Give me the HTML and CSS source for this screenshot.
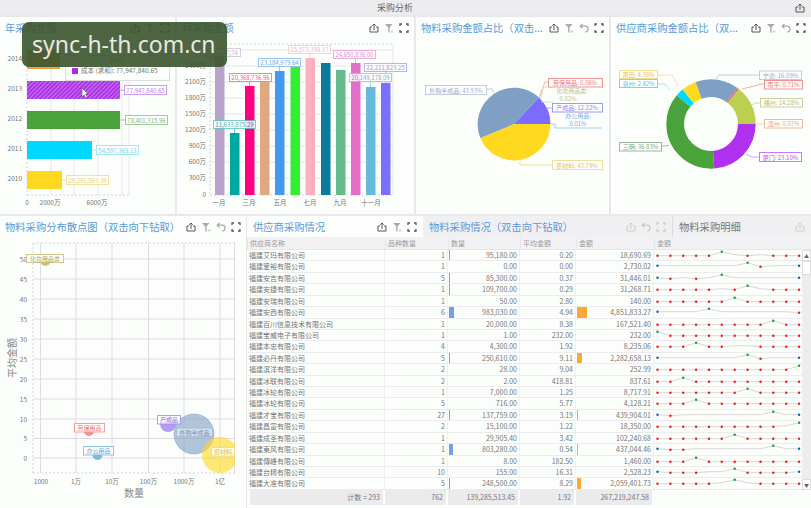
FILE: index.html
```html
<!DOCTYPE html>
<html lang="zh-CN">
<head>
	<title>采购分析</title>
	<meta charset="utf-8" />
	<link rel="stylesheet" href="styles.css">
</head>
<body>
<svg class="sprites">
	<symbol id="i-share" viewBox="0 0 10 10"><path d="M3 4H1v5h8V4H7M5 7V1M3.3 2.7L5 1l1.7 1.7" fill="none" stroke="currentColor" stroke-width="1"/></symbol>
	<symbol id="i-filter" viewBox="0 0 10 10"><path d="M1 1h7.5L5.6 4.6V9.5H4.2V4.6z" fill="currentColor"/><path d="M7 7.5l2 2m0-2l-2 2" stroke="currentColor" stroke-width=".7"/></symbol>
	<symbol id="i-undo" viewBox="0 0 10 10"><path d="M3.5 1L1.2 3.2l2.3 2.2M1.2 3.2h4.6a2.9 2.9 0 0 1 .6 5.8" fill="none" stroke="currentColor" stroke-width="1.3"/></symbol>
	<symbol id="i-expand" viewBox="0 0 10 10"><path d="M1 3V1h2M7 1h2v2M9 7v2H7M3 9H1V7" fill="none" stroke="currentColor" stroke-width="1.3"/></symbol>
</svg>

<div class="page">
	<header class="topbar">
		<span class="topbar-title">采购分析</span>
		<svg class="icon"><use href="#i-share"/></svg>
	</header>

	<div class="row-top">
		<!-- year bars -->
		<section class="panel panel-year">
			<div class="panel-head">
				<h2 class="panel-title">年采购金额</h2>
				<div class="tools">
					<svg class="icon"><use href="#i-share"/></svg>
					<svg class="icon off"><use href="#i-filter"/></svg>
					<svg class="icon"><use href="#i-expand"/></svg>
				</div>
			</div>
			<svg class="chart" width="175" height="176" viewBox="0 38 175 176">
				<defs>
					<pattern id="hatch" width="3" height="3" patternUnits="userSpaceOnUse" patternTransform="rotate(-45)">
						<rect width="3" height="3" fill="#a92be6"/>
						<rect width="3" height="1.2" fill="#c877f0"/>
					</pattern>
				</defs>
				<g class="grid">
					<path d="M27 46H129M51 46V195M74 46V195M98 46V195M122 46V195M129 46V195"/>
					<path class="dash" d="M27 46V195M27 195H129"/>
				</g>
				<rect x="27" y="50" width="33" height="19" fill="#f0a040"/>
				<rect x="27" y="81" width="93" height="18" fill="url(#hatch)"/>
				<rect x="27" y="111" width="93" height="18" fill="#4aa23a"/>
				<rect x="27" y="141" width="65" height="18" fill="#00d8ff"/>
				<rect x="27" y="171" width="35" height="18" fill="#ffd820"/>
				<g class="tick end">
					<text x="22" y="61">2014</text>
					<text x="22" y="91">2013</text>
					<text x="22" y="121">2012</text>
					<text x="22" y="151">2011</text>
					<text x="22" y="181">2010</text>
				</g>
				<g class="tick mid">
					<text x="27" y="205">0</text>
					<text x="50" y="205">2000万</text>
					<text x="97" y="205">6000万</text>
				</g>
				<g class="tag">
					<path d="M120 90h4" stroke="#c58af0"/><rect x="124.5" y="85.5" width="42" height="9" stroke="#c58af0"/><text x="145.5" y="92.5" fill="#b56ae8">77,947,840.65</text>
					<path d="M120 120h5" stroke="#8fc486"/><rect x="125.5" y="115.5" width="42" height="9" stroke="#8fc486"/><text x="146.5" y="122.5" fill="#6fa866">78,401,315.96</text>
					<path d="M92 150h4" stroke="#8fe4f8"/><rect x="96.5" y="145.5" width="42" height="9" stroke="#8fe4f8"/><text x="117.5" y="152.5" fill="#5cc8e8">54,597,369.13</text>
					<path d="M62 180h4" stroke="#f0dc90"/><rect x="66.5" y="175.5" width="42" height="9" stroke="#f0dc90"/><text x="87.5" y="182.5" fill="#e0c860">29,291,563.39</text>
				</g>
				<rect x="65.5" y="55.5" width="104" height="25" fill="#fbfefb" stroke="#ddd"/>
				<text class="tick mid" x="116" y="62">2013</text>
				<rect x="72" y="68" width="6" height="6" fill="#a92be6"/>
				<text class="tick" x="81" y="73">成本 (求和): 77,947,840.65</text>
				<path d="M82 88v9l2-2 2 3 1.5-1-2-3h2.5z" fill="#fff" stroke="#555" stroke-width=".6"/>
			</svg>
		</section>

		<!-- month bars -->
		<section class="panel panel-month">
			<div class="panel-head">
				<h2 class="panel-title">月采购金额</h2>
				<div class="tools">
					<svg class="icon"><use href="#i-share"/></svg>
					<svg class="icon off"><use href="#i-filter"/></svg>
					<svg class="icon"><use href="#i-expand"/></svg>
				</div>
			</div>
			<svg class="chart" width="237" height="176" viewBox="177 38 237 176">
				<g class="grid">
					<path d="M210 50H393M210 66H393M210 82H393M210 98H393M210 114H393M210 130H393M210 146H393M210 162H393M210 178H393M393 44V195"/>
					<path class="dash" d="M210 44H393M210 44V195M210 195H393"/>
				</g>
				<g class="tick end">
					<text x="206" y="68">2400万</text>
					<text x="206" y="84">2100万</text>
					<text x="206" y="100">1800万</text>
					<text x="206" y="116">1500万</text>
					<text x="206" y="132">1200万</text>
					<text x="206" y="148">900万</text>
					<text x="206" y="164">600万</text>
					<text x="206" y="180">300万</text>
					<text x="206" y="197">0</text>
				</g>
				<g class="tick mid">
					<text x="219" y="205">一月</text>
					<text x="249" y="205">三月</text>
					<text x="280" y="205">五月</text>
					<text x="310" y="205">七月</text>
					<text x="340" y="205">九月</text>
					<text x="371" y="205">十一月</text>
				</g>
				<rect x="215" y="52" width="9.5" height="143" fill="#b8a3cc"/>
				<rect x="230" y="133" width="9.5" height="62" fill="#00a8a0"/>
				<rect x="245" y="86" width="9.5" height="109" fill="#ff0080"/>
				<rect x="260" y="82" width="9.5" height="113" fill="#e0a880"/>
				<rect x="275" y="71" width="9.5" height="124" fill="#4499ee"/>
				<rect x="290.5" y="67" width="9.5" height="128" fill="#33ee33"/>
				<rect x="305.5" y="58" width="9.5" height="137" fill="#ffb0c0"/>
				<rect x="321" y="63" width="9.5" height="132" fill="#0a7a9a"/>
				<rect x="336" y="70" width="9.5" height="125" fill="#66bb8a"/>
				<rect x="351" y="63" width="9.5" height="132" fill="#e070c8"/>
				<rect x="366" y="87" width="9.5" height="108" fill="#66bbdd"/>
				<rect x="381" y="83" width="9.5" height="112" fill="#7a70ff"/>
				<g class="tag">
					<rect x="205.5" y="48.5" width="35" height="8" stroke="#d0c4dc"/><text x="232" y="55" fill="#b8a3cc">7,74</text>
					<path d="M234.5 128v5" stroke="#66c4c0"/><rect x="213.5" y="120.5" width="42" height="8" stroke="#66c4c0"/><text x="234.5" y="127" fill="#30a8b0">11,633,875.29</text>
					<path d="M249.5 82v4" stroke="#ff66b0"/><rect x="229.5" y="73.5" width="42" height="8" stroke="#ff66b0"/><text x="250.5" y="80" fill="#ff3090">20,368,736.96</text>
					<path d="M279.5 66v5" stroke="#88bbf0"/><rect x="258.5" y="58.5" width="42" height="8" stroke="#88bbf0"/><text x="279.5" y="65" fill="#5599dd">23,184,979.64</text>
					<path d="M310 53v5" stroke="#ffc8d4"/><rect x="288.5" y="45.5" width="42" height="8" stroke="#ffc8d4"/><text x="309.5" y="52" fill="#f8aabc">25,573,398.17</text>
					<path d="M355.5 58v5" stroke="#e8a0d8"/><rect x="333.5" y="50.5" width="42" height="8" stroke="#e8a0d8"/><text x="354.5" y="57" fill="#e070c8">24,650,836.00</text>
					<path d="M386 71v12" stroke="#aaa4ff"/><rect x="364.5" y="63.5" width="42" height="8" stroke="#aaa4ff"/><text x="385.5" y="70" fill="#8880f0">22,211,823.25</text>
					<path d="M370.5 82v5" stroke="#88cce0"/><rect x="349.5" y="73.5" width="42" height="8" stroke="#88cce0"/><text x="370.5" y="80" fill="#55aacc">20,149,178.09</text>
				</g>
			</svg>
		</section>

		<!-- material pie -->
		<section class="panel panel-pie">
			<div class="panel-head">
				<h2 class="panel-title">物料采购金额占比（双击...</h2>
				<div class="tools">
					<svg class="icon"><use href="#i-share"/></svg>
					<svg class="icon off"><use href="#i-filter"/></svg>
					<svg class="icon off"><use href="#i-undo"/></svg>
					<svg class="icon"><use href="#i-expand"/></svg>
				</div>
			</div>
			<svg class="chart" width="193" height="176" viewBox="416 38 193 176">
				<path d="M514 124H550.5A36.5 36.5 0 0 1 480.3 137.9z" fill="#ffd820"/>
				<path d="M514 124L480.3 137.9A36.5 36.5 0 0 1 539 97.5z" fill="#7f9fc4"/>
				<path d="M514 124L539 97.5A36.5 36.5 0 0 1 550.5 124z" fill="#7b6cff"/>
				<g class="tag">
					<path d="M487 89h5l3 5" stroke="#b8c4d8"/><rect x="425.5" y="85.5" width="61" height="9" stroke="#b8c4d8"/><text x="456" y="92.5" fill="#8aa0c0">外购半成品: 43.93%</text>
					<path d="M539 98l6-16h3" stroke="#f0a0a0"/><rect x="548.5" y="78.5" width="54" height="8.5" stroke="#f08080"/><text x="575" y="85" fill="#e86060">劳保用品: 0.06%</text>
					<path d="M541 98l2-11h10M541 102h12" stroke="#d8d8a8"/><text x="572" y="93" fill="#b8b87a">化妆用品类:</text><text x="568" y="101" fill="#b8b87a">0.02%</text>
					<path d="M546 108h6" stroke="#a8a0ff"/><rect x="552.5" y="103.5" width="50" height="8.5" stroke="#9088f0"/><text x="577" y="110" fill="#7b6cff">产成品: 12.22%</text>
					<path d="M551 124h4v4h47" stroke="#99c4ee"/><text x="578" y="118" fill="#66a0d8">办公用品:</text><text x="578" y="126" fill="#66a0d8">0.01%</text>
					<path d="M520 160v5h32" stroke="#f0dc90"/><rect x="552.5" y="160.5" width="50" height="9" stroke="#f0dc90"/><text x="577" y="167.5" fill="#d8b838">原材料: 43.79%</text>
				</g>
			</svg>
		</section>

		<!-- supplier donut -->
		<section class="panel panel-donut">
			<div class="panel-head">
				<h2 class="panel-title">供应商采购金额占比（双...</h2>
				<div class="tools">
					<svg class="icon"><use href="#i-share"/></svg>
					<svg class="icon off"><use href="#i-filter"/></svg>
					<svg class="icon off"><use href="#i-undo"/></svg>
					<svg class="icon"><use href="#i-expand"/></svg>
				</div>
			</div>
			<svg class="chart" width="200" height="176" viewBox="611 38 200 176">
				<g class="donut">
					<circle cx="711" cy="124" r="35.8" pathLength="100" stroke="#b030f0" stroke-dasharray="23.8 100"/>
					<circle cx="711" cy="124" r="35.8" pathLength="100" stroke="#4aa23a" stroke-dasharray="37.3 100" stroke-dashoffset="-23.8"/>
					<circle cx="711" cy="124" r="35.8" pathLength="100" stroke="#00d8ff" stroke-dasharray="2.9 100" stroke-dashoffset="-61.1"/>
					<circle cx="711" cy="124" r="35.8" pathLength="100" stroke="#ffd820" stroke-dasharray="5.4 100" stroke-dashoffset="-64"/>
					<circle cx="711" cy="124" r="35.8" pathLength="100" stroke="#7f9fc4" stroke-dasharray="15.6 100" stroke-dashoffset="-69.4"/>
					<circle cx="711" cy="124" r="35.8" pathLength="100" stroke="#f07070" stroke-dasharray="0.8 100" stroke-dashoffset="-85"/>
					<circle cx="711" cy="124" r="35.8" pathLength="100" stroke="#bcd050" stroke-dasharray="14.2 100" stroke-dashoffset="-85.8"/>
				</g>
				<g class="tag">
					<path d="M759 75h-40l-3 4" stroke="#b8c4d8"/><rect x="759.5" y="71" width="42" height="8.5" stroke="#b8c4d8"/><text x="780.5" y="77.5" fill="#8aa0c0">宁德: 16.09%</text>
					<path d="M764 84h-2l-20 5" stroke="#f0a0a0"/><rect x="764.5" y="80.5" width="38" height="8.5" stroke="#f08080"/><text x="783.5" y="87" fill="#e86060">南平: 0.71%</text>
					<path d="M760 103h-5l-3 2" stroke="#d0d8a0"/><rect x="760.5" y="98.5" width="42" height="8.5" stroke="#c4c890"/><text x="781.5" y="105" fill="#a8b060">福州: 14.28%</text>
					<path d="M764 124h-8" stroke="#f4c8a0"/><rect x="764.5" y="119.5" width="38" height="8.5" stroke="#f0b080"/><text x="783.5" y="126" fill="#e89858">漳州: 0.07%</text>
					<path d="M759 157h-7l-6-3" stroke="#d090f8"/><rect x="759.5" y="152.5" width="42" height="9" stroke="#c060f4"/><text x="780.5" y="159.5" fill="#b030f0">厦门: 23.10%</text>
					<path d="M662 146h4l3-1" stroke="#a0a8a0"/><rect x="619.5" y="142.5" width="42" height="8.5" stroke="#90a890"/><text x="640.5" y="149" fill="#6a9a60">三明: 36.83%</text>
					<path d="M657 75h15l6 10" stroke="#f4e0a0"/><rect x="619.5" y="70.5" width="38" height="8" stroke="#f0d880"/><text x="638.5" y="77" fill="#e0b830">莆田: 4.38%</text>
					<path d="M657 84h8l5 6" stroke="#90e8fc"/><rect x="619.5" y="79.5" width="38" height="8" stroke="#50d8f8"/><text x="638.5" y="86" fill="#10c0e8">泉州: 2.42%</text>
				</g>
			</svg>
		</section>
	</div>

	<div class="row-bottom">
		<!-- scatter -->
		<section class="panel panel-scatter">
			<div class="panel-head">
				<h2 class="panel-title">物料采购分布散点图（双击向下钻取）</h2>
				<div class="tools">
					<svg class="icon"><use href="#i-share"/></svg>
					<svg class="icon off"><use href="#i-filter"/></svg>
					<svg class="icon off"><use href="#i-undo"/></svg>
					<svg class="icon"><use href="#i-expand"/></svg>
				</div>
			</div>
			<svg class="chart" width="246" height="271" viewBox="0 237 246 271">
				<defs><clipPath id="plot"><rect x="33" y="243" width="202" height="230"/></clipPath></defs>
				<g class="grid strong">
					<path d="M40.5 243V473M76 243V473M112 243V473M148.5 243V473M184 243V473M220 243V473M234.5 243V473"/>
					<path d="M33 259H235M33 279H235M33 299H235M33 319H235M33 339H235M33 359H235M33 379H235M33 399H235M33 419H235M33 438.5H235M33 458H235"/>
					<path class="dash" d="M33 243H235M33 243V473M33 473H235"/>
				</g>
				<g class="tick end">
					<text x="27" y="261.5">50</text>
					<text x="27" y="281.5">45</text>
					<text x="27" y="301.5">40</text>
					<text x="27" y="321.5">35</text>
					<text x="27" y="341.5">30</text>
					<text x="27" y="361.5">25</text>
					<text x="27" y="381.5">20</text>
					<text x="27" y="401.5">15</text>
					<text x="27" y="421.5">10</text>
					<text x="27" y="441">5</text>
					<text x="27" y="460.5">0</text>
				</g>
				<g class="tick mid">
					<text x="41" y="484">1000</text>
					<text x="76" y="484">1万</text>
					<text x="112" y="484">10万</text>
					<text x="148.5" y="484">100万</text>
					<text x="184" y="484">1000万</text>
					<text x="220" y="484">1亿</text>
				</g>
				<text class="axis-name" x="134" y="497">数量</text>
				<text class="axis-name" transform="translate(16 358) rotate(-90)">平均金额</text>
				<g clip-path="url(#plot)">
					<circle cx="45.5" cy="261" r="5" fill="#c8c07a"/>
					<circle cx="89" cy="431" r="5" fill="#f09090"/>
					<circle cx="97.5" cy="455" r="5" fill="#80b8e0"/>
					<circle cx="168" cy="424" r="8" fill="#b49cf0"/>
					<circle cx="194" cy="434" r="20" fill="#7f9fc4" fill-opacity=".6" stroke="#7f9fc4" stroke-width=".5"/>
					<circle cx="220" cy="455" r="18" fill="#ffd820" fill-opacity=".6"/>
				</g>
				<g class="tag">
					<rect x="26.5" y="254.5" width="37" height="8" stroke="#c8c07a"/><text x="45" y="261" fill="#a8a058">化妆用品类</text>
					<rect x="74.5" y="423.5" width="30" height="8.5" stroke="#f09090"/><text x="89.5" y="430" fill="#e86868">劳保用品</text>
					<rect x="83.5" y="446.5" width="30" height="8.5" stroke="#80b8e0"/><text x="98.5" y="453" fill="#5c98c8">办公用品</text>
					<rect x="157.5" y="415.5" width="23" height="8.5" stroke="#a090f0"/><text x="169" y="422" fill="#8070e0">产成品</text>
					<rect x="176.5" y="428" width="36" height="8.5" stroke="#a8bcd4" fill-opacity=".5"/><text x="194.5" y="434.5" fill="#6a88ac">外购半成品</text>
					<rect x="211.5" y="447.5" width="23" height="8.5" stroke="#f0dc90"/><text x="223" y="454" fill="#d8b838">原材料</text>
				</g>
			</svg>
		</section>

		<!-- table with tabs -->
		<section class="panel panel-table">
			<div class="tabs">
				<div class="tab tab-first">
					<h2 class="panel-title">供应商采购情况</h2>
					<div class="tools">
						<svg class="icon"><use href="#i-share"/></svg>
						<svg class="icon off"><use href="#i-filter"/></svg>
						<svg class="icon"><use href="#i-expand"/></svg>
					</div>
				</div>
				<div class="tab tab-second">
					<h2 class="panel-title">物料采购情况（双击向下钻取）</h2>
					<div class="tools faint">
						<svg class="icon"><use href="#i-share"/></svg>
						<svg class="icon"><use href="#i-undo"/></svg>
						<svg class="icon"><use href="#i-expand"/></svg>
					</div>
				</div>
				<div class="tab tab-third">
					<h2 class="panel-title grey">物料采购明细</h2>
					<div class="tools faint">
						<svg class="icon"><use href="#i-share"/></svg>
					</div>
				</div>
			</div>
			<div class="grid-head">
				<div>供应商名称</div>
				<div>品种数量</div>
				<div>数量</div>
				<div>平均金额</div>
				<div>金额</div>
				<div>金额</div>
			</div>
			<div class="grid-body">
				<div class="rows" id="rows"></div>
				<div class="scrollbar">
					<div class="scroll-btn">▲</div>
					<div class="scroll-thumb"></div>
					<div class="scroll-space"></div>
					<div class="scroll-btn">▼</div>
				</div>
			</div>
			<div class="grid-foot">
				<div>计数 = 293</div>
				<div>762</div>
				<div>139,285,513.45</div>
				<div>1.92</div>
				<div>267,219,247.58</div>
			</div>
		</section>
	</div>
</div>

<div class="watermark">sync-h-th.com.cn</div>
<script src="app.js"></script>
</body>
</html>
```

FILE: styles.css
```css
html, body {
	margin: 0;
	padding: 0;
	height: 100%;
	overflow: hidden;
}
body {
	background: #e8e8ec;
	font: 7px "Noto Sans CJK SC", "Liberation Sans", sans-serif;
	color: #777;
}
.sprites {
	display: none;
}
.page {
	width: 811px;
	height: 508px;
	display: flex;
	flex-direction: column;
	gap: 2px;
}
.topbar {
	height: 15px;
	display: flex;
	align-items: center;
	padding: 0 6px 0 0;
	background: #ececef;
}
.topbar-title {
	flex: 1;
	padding-right: 5px;
	text-align: center;
	font-size: 9px;
	color: #666;
}
.icon {
	width: 10px;
	height: 10px;
	color: #555;
	flex: none;
}
.icon.off {
	color: #aaa;
}
.row-top {
	height: 197px;
	display: flex;
	gap: 2px;
}
.row-bottom {
	height: 292px;
	display: flex;
	gap: 1px;
}
.panel {
	background: #fbfefb;
	display: flex;
	flex-direction: column;
	overflow: hidden;
}
.panel-year { width: 175px; }
.panel-month { width: 237px; }
.panel-pie { width: 193px; }
.panel-donut { width: 200px; }
.panel-scatter { width: 246px; }
.panel-table { width: 564px; }

.panel-head {
	height: 21px;
	flex: none;
	display: flex;
	align-items: center;
	justify-content: space-between;
	padding: 0 5px;
}
.panel-title {
	margin: 0;
	font-size: 10.3px;
	font-weight: normal;
	color: #5a9ad8;
	white-space: nowrap;
}
.panel-title.grey {
	color: #777;
}
.tools {
	display: flex;
	gap: 5px;
}
.tools.faint .icon {
	color: #ccc;
}
.chart {
	display: block;
	flex: none;
}

/* chart bits */
.grid path {
	fill: none;
	stroke: #e8e4ec;
	stroke-width: 1;
}
.grid.strong path {
	stroke: #e2d9e8;
}
.grid path.dash {
	stroke: #d8d2de;
	stroke-dasharray: 2 2;
}
.tick text, text.tick {
	font-size: 6.5px;
	fill: #777;
}
.tick.end text {
	text-anchor: end;
}
.tick.mid text, text.tick.mid {
	text-anchor: middle;
}
.tag {
	opacity: .85;
}
.tag rect {
	fill: #fff;
	stroke-width: 1;
}
.tag path {
	fill: none;
	stroke-width: 1;
}
.tag text {
	font-size: 6px;
	text-anchor: middle;
}
.donut circle {
	fill: none;
	stroke-width: 17.7;
}
.axis-name {
	font-size: 10px;
	fill: #888;
	text-anchor: middle;
}

/* table */
.tabs {
	height: 21px;
	flex: none;
	display: flex;
	background: #f0f0f2;
}
.tab {
	display: flex;
	align-items: center;
	justify-content: space-between;
}
.tab-first {
	width: 176px;
	padding: 0 6px;
	box-sizing: border-box;
	background: #fbfefb;
}
.tab-second {
	width: 250px;
	padding: 0 6px;
	box-sizing: border-box;
	border-right: 1px solid #ddd;
}
.tab-third {
	flex: 1;
	padding: 0 6px;
}
.grid-head, .row, .grid-foot {
	display: grid;
	grid-template-columns: 138px 63px 72px 56px 78px 148px;
}
.grid-head {
	height: 12px;
	flex: none;
	align-items: center;
	background: #f2f2f4;
	border-bottom: 1px solid #e6e6ea;
	color: #999;
	line-height: 11px;
}
.grid-head div {
	padding-left: 2px;
	border-left: 1px solid #e6e6ea;
}
.grid-body {
	height: 240px;
	flex: none;
	display: flex;
}
.rows {
	width: 555px;
}
.row {
	height: 11.43px;
	box-sizing: border-box;
	border-bottom: 1px solid #ececf0;
	line-height: 11.4px;
}
.cell {
	position: relative;
	height: 10.4px;
	padding: 0 2px;
	text-align: right;
	border-right: 1px solid #f0f0f0;
	white-space: nowrap;
}
.cell.name {
	text-align: left;
}
.cell-bar {
	position: absolute;
	left: 1px;
	top: 0;
	bottom: 0;
}
.cell-bar.qty {
	background: #6fa0e8;
}
.cell-bar.amt {
	background: #ffa838;
}
.spark {
	display: block;
}
.scrollbar {
	width: 9px;
	display: flex;
	flex-direction: column;
	background: #ededf0;
}
.scroll-btn {
	height: 11px;
	background: #fff;
	border: 1px solid #ddd;
	box-sizing: border-box;
	font-size: 5px;
	line-height: 9px;
	text-align: center;
	color: #666;
}
.scroll-thumb {
	height: 14px;
	background: #fff;
	border: 1px solid #ddd;
	box-sizing: border-box;
}
.scroll-space {
	flex: 1;
}
.grid-foot {
	height: 15px;
	flex: none;
	margin-left: 3px;
	grid-template-columns: 135px 63px 72px 56px 78px;
	line-height: 15px;
}
.grid-foot div {
	padding-right: 3px;
	text-align: right;
	background: #ebebee;
	border-right: 2px solid #fbfefb;
}

.watermark {
	position: absolute;
	left: 22px;
	top: 22px;
	width: 205px;
	height: 45px;
	box-sizing: border-box;
	padding-left: 10px;
	border-radius: 7px;
	background: rgba(58, 84, 44, .9);
	color: #e8e8e4;
	font: 23px/45px "Noto Sans", sans-serif;
	white-space: nowrap;
}
```

FILE: app.js
```js
// name, kinds, qty, avg, amount, sparkline
// sparkline: r = normal point, g = peak, b = end point, . = no marker
var data = [
	["福建艾玛有限公司", 1, 95180, "0.20", 18690.69, "rrrrrg.r.rrr"],
	["福建爱裕有限公司", 1, 0, "0.00", 2730.02, "b......gr..b"],
	["福建安吉有限公司", 5, 85300, "0.37", 31446.01, "br.r.g.....b"],
	["福建安捷有限公司", 1, 109700, "0.29", 31268.71, "rrrrr.rg.rrr"],
	["福建安瑞有限公司", 1, 50, "2.80", 140, "rrrrrrgrrrrr"],
	["福建安西有限公司", 6, 983030, "4.94", 4851833.27, "b...g......r"],
	["福建百川信息技术有限公司", 1, 20000, "8.38", 167521.40, "rrrrrrrrrgrr"],
	["福建宝威电子有限公司", 1, 1, "232.00", 232, "grrrrrrrrrrr"],
	["福建本忠有限公司", 4, 4300, "1.92", 8235.06, "rrrgrr..rrrr"],
	["福建必丹有限公司", 5, 250610, "9.11", 2282658.13, "b......gr..b"],
	["福建滨洋有限公司", 2, 28, "9.04", 252.99, "rrrrrrrrrrrg"],
	["福建冰联有限公司", 2, 2, "418.81", 837.61, "rrgrrrrrrrrr"],
	["福建冰轮有限公司", 1, 7000, "1.25", 8717.91, "rrrrrrrgrrrr"],
	["福建冰轮有限公司", 5, 716, "5.77", 4128.21, "rrrgrrrrrrrr"],
	["福建才宝有限公司", 27, 137759, "3.19", 439904.01, "br.......g.b"],
	["福建昌富有限公司", 2, 15100, "1.22", 18350, "rrrrrrrrrr.g"],
	["福建成圣有限公司", 1, 29905.40, "3.42", 102240.68, "rrrrrrgrrrrr"],
	["福建東风有限公司", 1, 803280, "0.54", 437044.46, "brr......g.b"],
	["福建傳峰有限公司", 1, 8, "182.50", 1460, "rrrgrrrrrrrr"],
	["福建台精有限公司", 10, 155, "16.31", 2528.23, "brrr..grrrrb"],
	["福建大准有限公司", 5, 248500, "8.29", 2059401.73, "rrrrr.g.rrrr"]
];

var colors = { r: "#f01818", g: "#1a9a40", b: "#1060b0" };
var heights = { r: 5.7, g: 1.8, b: 4.7, ".": 4.7 };

function money(n) {
	return n.toLocaleString("en-US", { minimumFractionDigits: 2, maximumFractionDigits: 2 });
}

function spark(pattern) {
	var line = "", dots = "";
	for (var i = 0; i < pattern.length; i++) {
		var c = pattern.charAt(i);
		var x = (3.5 + i * 12.87).toFixed(1);
		var y = heights[c];
		line += x + "," + y + " ";
		if (c != ".") {
			dots += '<circle cx="' + x + '" cy="' + y + '" r="1.2" fill="' + colors[c] + '"/>';
		}
	}
	return '<svg class="spark" width="148" height="10.4"><polyline points="' + line + '" fill="none" stroke="#d8d8d8"/>' + dots + '</svg>';
}

// small values get no bar at all, the rest at least one pixel
function bar(kind, width) {
	if (width < 0.4) return "";
	return '<span class="cell-bar ' + kind + '" style="width:' + Math.max(width, 1).toFixed(1) + 'px"></span>';
}

var html = "";
for (var i = 0; i < data.length; i++) {
	var d = data[i];
	html += '<div class="row">'
		+ '<div class="cell name">' + d[0] + '</div>'
		+ '<div class="cell">' + d[1] + '</div>'
		+ '<div class="cell">' + bar("qty", d[2] / 983030 * 5) + money(d[2]) + '</div>'
		+ '<div class="cell">' + d[3] + '</div>'
		+ '<div class="cell">' + bar("amt", d[4] / 4851833 * 9.5) + money(d[4]) + '</div>'
		+ '<div>' + spark(d[5]) + '</div>'
		+ '</div>';
}
document.getElementById("rows").innerHTML = html;
```
